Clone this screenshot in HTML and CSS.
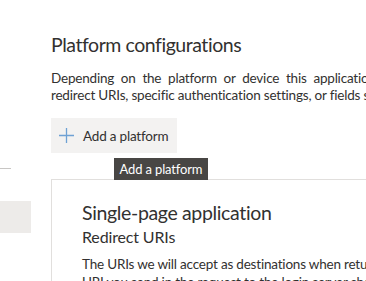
FILE: index.html
```html
<!DOCTYPE html>
<html>
<head>
<meta charset="utf-8">
<link rel="stylesheet" href="styles.css">
</head>
<body>
<div class="page">
  <aside class="sidebar">
    <div class="sep"></div>
    <div class="nav-item"></div>
  </aside>
  <main class="main">
    <h1 class="title">Platform configurations</h1>
    <p class="desc">
      <span class="line first">Depending on the platform or device this application is targeting, additional configuration may be required such as</span>
      <span class="line">redirect URIs, specific authentication settings, or fields specific to the platform.</span>
    </p>
    <div class="btn-wrap">
      <button class="add-btn" type="button">
        <svg class="plus" width="15" height="15" viewBox="0 0 15 15"><path d="M7.5 0V15M0 7.5H15" stroke="#6ea1d4" stroke-width="1.3" fill="none"/></svg>
        <span>Add a platform</span>
      </button>
      <div class="tooltip">Add a platform</div>
    </div>
    <section class="card">
      <h2 class="card-title">Single-page application</h2>
      <h3 class="card-sub">Redirect URIs</h3>
      <p class="card-text">
        <span class="line">The URIs we will accept as destinations when returning authentication responses (tokens) after successfully authenticating or signing out users. The redirect</span>
        <span class="line">URI you send in the request to the login server should match one listed here. Also referred to as reply URLs.</span>
      </p>
    </section>
  </main>
</div>
</body>
</html>
```
FILE: styles.css
```css
html, body {
  margin: 0;
  padding: 0;
  background: #ffffff;
  overflow: hidden;
}
body {
  font-family: Lato, "Open Sans", sans-serif;
  color: #323130;
}
.page {
  display: flex;
  width: 366px;
  height: 281px;
  overflow: hidden;
}
.sidebar {
  flex: 0 0 31px;
  display: flex;
  flex-direction: column;
  padding-top: 168px;
}
.sep {
  width: 11px;
  height: 1px;
  background: #c8c6c4;
}
.nav-item {
  margin-top: 32px;
  height: 32px;
  background: #edebe9;
}
.main {
  flex: 0 0 auto;
  padding-left: 20px;
  padding-top: 31px;
  width: 800px;
}
.title {
  margin: 0;
  font-size: 19.5px;
  font-weight: 400;
  line-height: 28px;
  letter-spacing: -0.45px;
}
.desc {
  margin: 11px 0 0;
  font-size: 13.5px;
  line-height: 17px;
  letter-spacing: -0.2px;
  width: 705px;
}
.line {
  display: block;
  white-space: nowrap;
}
.line.first {
  white-space: normal;
  text-align: justify;
  text-align-last: justify;
}
.btn-wrap {
  position: relative;
  margin-top: 14px;
}
.add-btn {
  display: flex;
  align-items: center;
  gap: 9px;
  height: 35px;
  padding: 0 9px 0 8px;
  border: none;
  background: #f3f2f1;
  font-family: inherit;
  font-size: 13.5px;
  letter-spacing: -0.2px;
  color: #323130;
}
.plus {
  display: block;
}
.tooltip {
  position: absolute;
  left: 63px;
  top: 40px;
  width: 94px;
  height: 22px;
  background: #484644;
  color: #ffffff;
  font-size: 13px;
  letter-spacing: -0.15px;
  line-height: 22px;
  text-align: center;
  z-index: 2;
}
.card {
  margin-top: 26px;
  border: 1px solid #e1dfdd;
  padding: 20px 30px;
  width: 640px;
}
.card-title {
  margin: 0;
  font-size: 19.5px;
  font-weight: 400;
  line-height: 26px;
  letter-spacing: -0.35px;
}
.card-sub {
  margin: 0;
  font-size: 16px;
  font-weight: 400;
  line-height: 22px;
  letter-spacing: -0.15px;
}
.card-text {
  margin: 7px 0 0;
  font-size: 13.5px;
  line-height: 18px;
  letter-spacing: -0.2px;
}
```
